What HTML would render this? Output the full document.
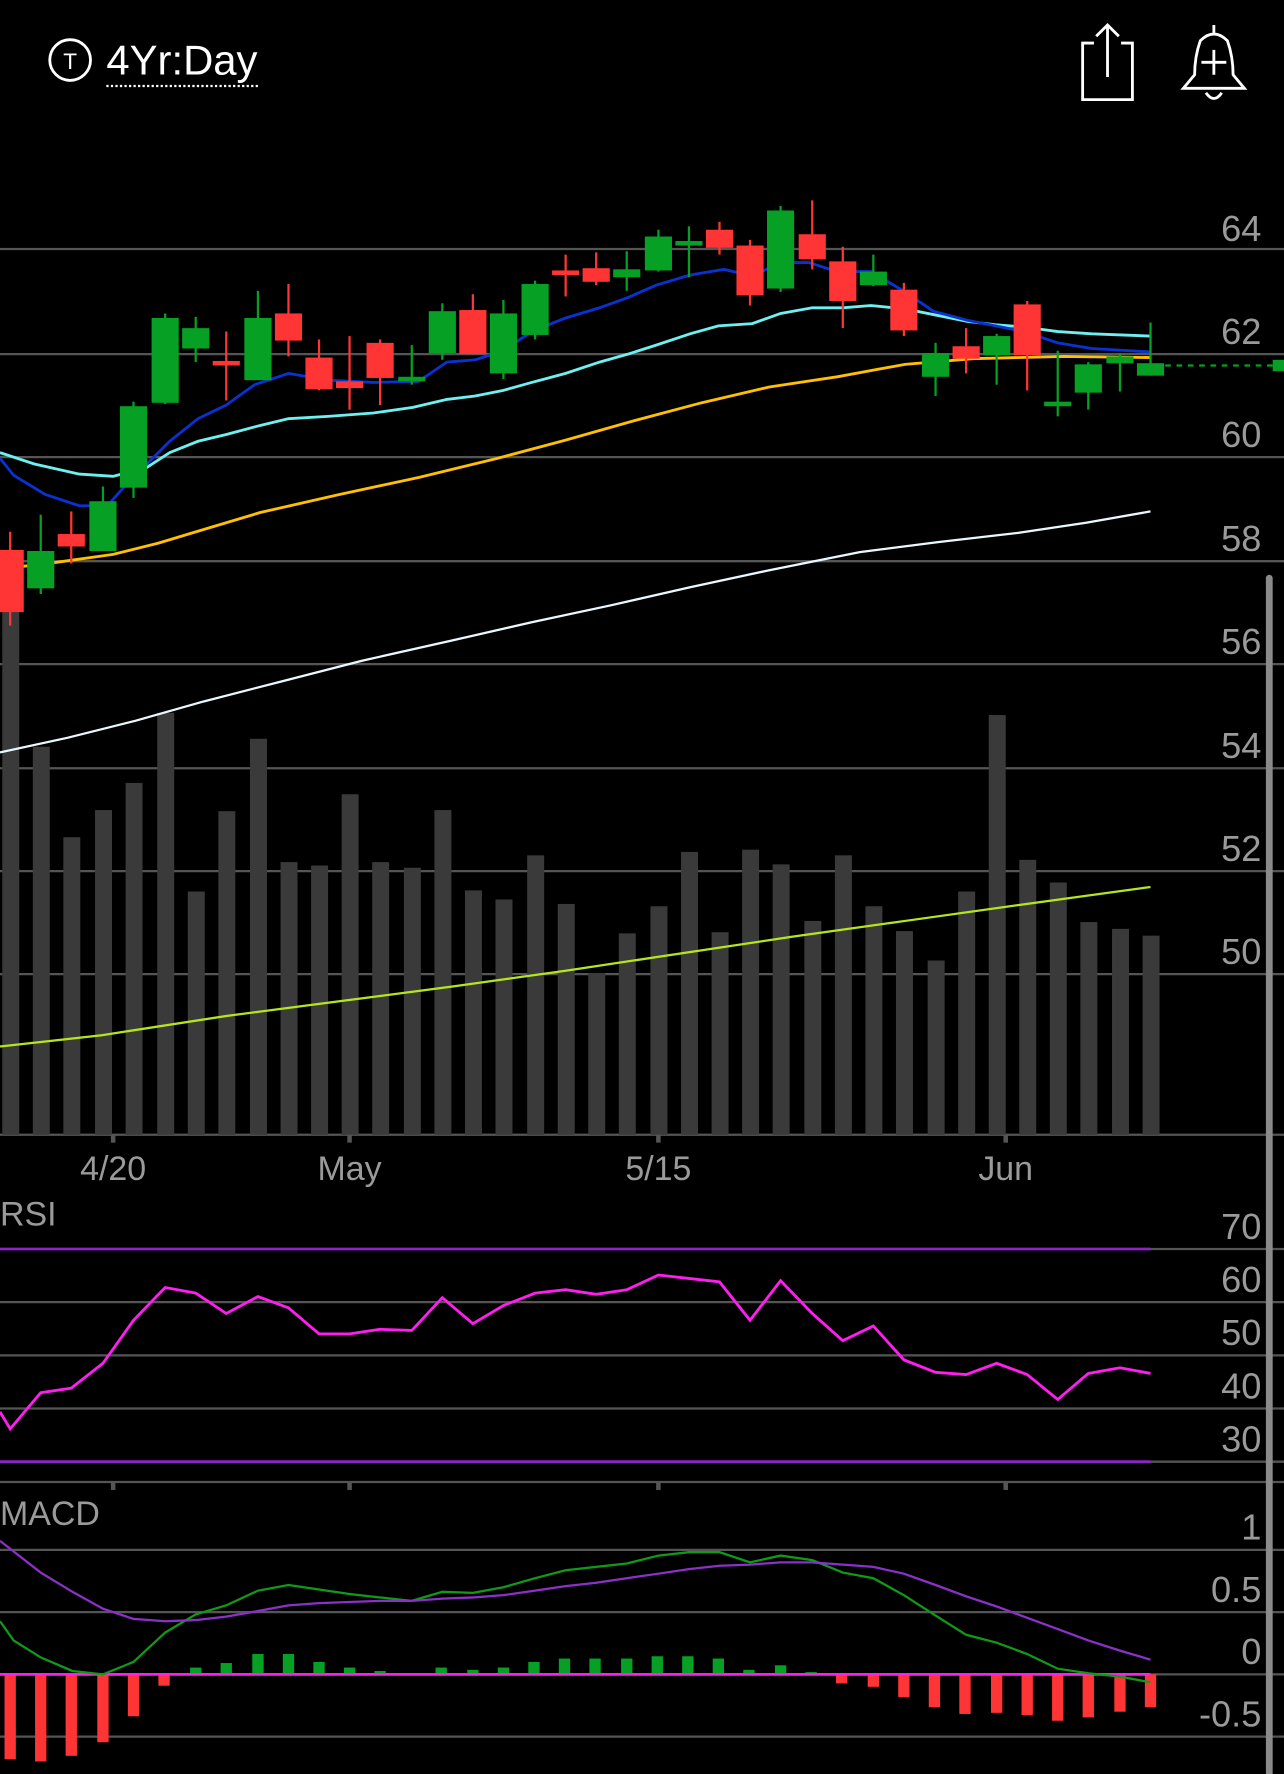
<!DOCTYPE html>
<html><head><meta charset="utf-8">
<style>
html,body{margin:0;padding:0;background:#000;}
svg{display:block;}
text{font-family:"Liberation Sans",sans-serif;}
</style></head><body>
<svg width="1284" height="1774" viewBox="0 0 1135 1568" xmlns="http://www.w3.org/2000/svg">
<rect width="1135" height="1568" fill="#000"/>
<!-- header -->
<circle cx="62" cy="53" r="18" fill="none" stroke="#fff" stroke-width="2.5"/>
<text x="62" y="61" font-size="20" fill="#fff" text-anchor="middle">T</text>
<text x="94" y="66" font-size="37" fill="#fff">4Yr:Day</text>
<line x1="94" y1="76" x2="228" y2="76" stroke="#fff" stroke-width="2" stroke-dasharray="2,2"/>
<g fill="none" stroke="#fff" stroke-width="2.5">
<path d="M967 38 H957 V88 H1001 V38 H991"/>
<path d="M979 68 V22 M969 32 L979 22 L989 32"/>
<path d="M1073 22 V30 M1061 36 Q1073 24 1085 36 Q1090 50 1090 66 L1100 78 H1046 L1056 66 Q1056 50 1061 36 Z"/>
<path d="M1066 82 Q1073 92 1080 82"/>
<path d="M1073 44 V66 M1062 55 H1084"/>
</g>
<!-- price grid -->
<g stroke="#555" stroke-width="2">
<line x1="0" y1="220" x2="1135" y2="220"/><line x1="0" y1="313" x2="1135" y2="313"/>
<line x1="0" y1="404" x2="1135" y2="404"/><line x1="0" y1="496" x2="1135" y2="496"/>
<line x1="0" y1="587" x2="1135" y2="587"/><line x1="0" y1="679" x2="1135" y2="679"/>
<line x1="0" y1="770" x2="1135" y2="770"/><line x1="0" y1="861" x2="1135" y2="861"/>
<line x1="0" y1="1003" x2="1135" y2="1003"/>
</g>
<g fill="#9a9a9a" font-size="32" text-anchor="end">
<text x="1115" y="213">64</text><text x="1115" y="304">62</text><text x="1115" y="395">60</text>
<text x="1115" y="487">58</text><text x="1115" y="578">56</text><text x="1115" y="670">54</text>
<text x="1115" y="761">52</text><text x="1115" y="852">50</text>
</g>
<!-- volume -->
<g fill="#3a3a3a">
<rect x="2" y="540" width="15" height="463"/><rect x="29" y="660" width="15" height="343"/>
<rect x="56" y="740" width="15" height="263"/><rect x="84" y="716" width="15" height="287"/>
<rect x="111" y="692" width="15" height="311"/><rect x="139" y="630" width="15" height="373"/>
<rect x="166" y="788" width="15" height="215"/><rect x="193" y="717" width="15" height="286"/>
<rect x="221" y="653" width="15" height="350"/><rect x="248" y="762" width="15" height="241"/>
<rect x="275" y="765" width="15" height="238"/><rect x="302" y="702" width="15" height="301"/>
<rect x="329" y="762" width="15" height="241"/><rect x="357" y="767" width="15" height="236"/>
<rect x="384" y="716" width="15" height="287"/><rect x="411" y="787" width="15" height="216"/>
<rect x="438" y="795" width="15" height="208"/><rect x="466" y="756" width="15" height="247"/>
<rect x="493" y="799" width="15" height="204"/><rect x="520" y="860" width="15" height="143"/>
<rect x="547" y="825" width="15" height="178"/><rect x="575" y="801" width="15" height="202"/>
<rect x="602" y="753" width="15" height="250"/><rect x="629" y="824" width="15" height="179"/>
<rect x="656" y="751" width="15" height="252"/><rect x="683" y="764" width="15" height="239"/>
<rect x="711" y="814" width="15" height="189"/><rect x="738" y="756" width="15" height="247"/>
<rect x="765" y="801" width="15" height="202"/><rect x="792" y="823" width="15" height="180"/>
<rect x="820" y="849" width="15" height="154"/><rect x="847" y="788" width="15" height="215"/>
<rect x="874" y="632" width="15" height="371"/><rect x="901" y="760" width="15" height="243"/>
<rect x="928" y="780" width="15" height="223"/><rect x="955" y="815" width="15" height="188"/>
<rect x="983" y="821" width="15" height="182"/><rect x="1010" y="827" width="15" height="176"/>
</g>
<polyline fill="none" stroke="#b5e61d" stroke-width="2" points="0,925 90,915 200,898 300,885 400,872 500,858 600,843 700,828 800,814 900,800 1017,784"/>
<!-- MAs -->
<polyline fill="none" stroke="#e8f8ff" stroke-width="2" points="0,665 60,652 120,637 180,620 250,602 320,584 400,566 470,550 540,535 610,519 680,504 760,488 830,479 900,471 960,462 1017,452"/>
<polyline fill="none" stroke="#ffc000" stroke-width="2.5" points="0,503 50,497 100,490 140,480 180,468 230,453 300,437 370,422 440,405 500,389 560,372 620,356 680,342 740,333 800,322 860,317 940,315 1017,316"/>
<polyline fill="none" stroke="#6ff0f0" stroke-width="2.5" points="0,400 30,410 70,419 100,421 130,413 150,400 175,390 200,384 230,376 255,370 290,368 330,365 365,360 395,353 420,350 445,345 470,338 500,330 530,320 555,313 580,305 610,295 635,288 665,286 690,277 718,272 745,272 770,270 800,273 825,278 855,284 880,287 905,289 935,293 965,295 1017,297"/>
<polyline fill="none" stroke="#0a32d0" stroke-width="2.5" points="0,405 12,420 40,437 70,447 95,447 110,430 130,410 150,390 175,370 200,358 225,340 255,330 290,336 330,338 370,337 395,320 420,318 445,310 470,293 500,281 530,272 555,263 580,252 610,243 640,238 665,244 690,232 715,232 740,240 770,240 800,258 825,275 855,283 880,288 905,293 935,303 965,308 1017,311"/>
<!-- candles -->
<g stroke-width="2">
<g stroke="#ff3535" fill="#ff3535">
<line x1="9" y1="470" x2="9" y2="553"/><rect x="-2" y="487" width="22" height="53"/>
<line x1="63" y1="452" x2="63" y2="498"/><rect x="52" y="473" width="22" height="9"/>
<line x1="200" y1="293" x2="200" y2="354"/><rect x="189" y="320" width="22" height="2"/>
<line x1="255" y1="251" x2="255" y2="315"/><rect x="244" y="278" width="22" height="22"/>
<line x1="282" y1="300" x2="282" y2="345"/><rect x="271" y="317" width="22" height="26"/>
<line x1="309" y1="297" x2="309" y2="362"/><rect x="298" y="338" width="22" height="4"/>
<line x1="336" y1="300" x2="336" y2="358"/><rect x="325" y="304" width="22" height="29"/>
<line x1="418" y1="260" x2="418" y2="313"/><rect x="407" y="275" width="22" height="37"/>
<line x1="500" y1="225" x2="500" y2="262"/><rect x="489" y="240" width="22" height="2"/>
<line x1="527" y1="223" x2="527" y2="252"/><rect x="516" y="238" width="22" height="10"/>
<line x1="636" y1="196" x2="636" y2="225"/><rect x="625" y="204" width="22" height="14"/>
<line x1="663" y1="212" x2="663" y2="270"/><rect x="652" y="218" width="22" height="42"/>
<line x1="718" y1="177" x2="718" y2="238"/><rect x="707" y="208" width="22" height="20"/>
<line x1="745" y1="218" x2="745" y2="290"/><rect x="734" y="232" width="22" height="33"/>
<line x1="799" y1="250" x2="799" y2="297"/><rect x="788" y="257" width="22" height="34"/>
<line x1="854" y1="290" x2="854" y2="330"/><rect x="843" y="307" width="22" height="9"/>
<line x1="908" y1="266" x2="908" y2="345"/><rect x="897" y="270" width="22" height="43"/>
</g>
<g stroke="#06a024" fill="#06a024">
<line x1="36" y1="455" x2="36" y2="525"/><rect x="25" y="488" width="22" height="31"/>
<line x1="91" y1="430" x2="91" y2="486"/><rect x="80" y="444" width="22" height="42"/>
<line x1="118" y1="355" x2="118" y2="440"/><rect x="107" y="360" width="22" height="70"/>
<line x1="146" y1="277" x2="146" y2="357"/><rect x="135" y="282" width="22" height="73"/>
<line x1="173" y1="280" x2="173" y2="320"/><rect x="162" y="291" width="22" height="16"/>
<line x1="228" y1="257" x2="228" y2="335"/><rect x="217" y="282" width="22" height="53"/>
<line x1="364" y1="305" x2="364" y2="340"/><rect x="353" y="334" width="22" height="2"/>
<line x1="391" y1="268" x2="391" y2="318"/><rect x="380" y="276" width="22" height="35"/>
<line x1="445" y1="265" x2="445" y2="335"/><rect x="434" y="278" width="22" height="51"/>
<line x1="473" y1="248" x2="473" y2="300"/><rect x="462" y="252" width="22" height="43"/>
<line x1="554" y1="222" x2="554" y2="257"/><rect x="543" y="239" width="22" height="5"/>
<line x1="582" y1="203" x2="582" y2="240"/><rect x="571" y="210" width="22" height="28"/>
<line x1="609" y1="200" x2="609" y2="245"/><rect x="598" y="214" width="22" height="2"/>
<line x1="690" y1="182" x2="690" y2="258"/><rect x="679" y="187" width="22" height="67"/>
<line x1="772" y1="225" x2="772" y2="253"/><rect x="761" y="241" width="22" height="10"/>
<line x1="827" y1="303" x2="827" y2="350"/><rect x="816" y="313" width="22" height="19"/>
<line x1="881" y1="295" x2="881" y2="340"/><rect x="870" y="298" width="22" height="15"/>
<line x1="935" y1="310" x2="935" y2="368"/><rect x="924" y="356" width="22" height="2"/>
<line x1="962" y1="320" x2="962" y2="362"/><rect x="951" y="323" width="22" height="23"/>
<line x1="990" y1="312" x2="990" y2="346"/><rect x="979" y="316" width="22" height="4"/>
<line x1="1017" y1="285" x2="1017" y2="332"/><rect x="1006" y="322" width="22" height="9"/>
</g>
</g>
<line x1="1030" y1="323" x2="1125" y2="323" stroke="#06a024" stroke-width="2" stroke-dasharray="5,5"/>
<rect x="1125" y="318" width="12" height="10" fill="#06a024"/>
<!-- date axis -->
<g stroke="#555" stroke-width="4">
<line x1="100" y1="1003" x2="100" y2="1010"/><line x1="309" y1="1003" x2="309" y2="1010"/>
<line x1="582" y1="1003" x2="582" y2="1010"/><line x1="889" y1="1003" x2="889" y2="1010"/>
</g>
<g fill="#9a9a9a" font-size="30" text-anchor="middle">
<text x="100" y="1043">4/20</text><text x="309" y="1043">May</text><text x="582" y="1043">5/15</text><text x="889" y="1043">Jun</text>
</g>
<!-- RSI -->
<text x="0" y="1083" fill="#9a9a9a" font-size="30">RSI</text>
<g stroke="#555" stroke-width="2">
<line x1="0" y1="1151" x2="1135" y2="1151"/><line x1="0" y1="1198" x2="1135" y2="1198"/>
<line x1="0" y1="1245" x2="1135" y2="1245"/><line x1="0" y1="1310" x2="1135" y2="1310"/>
<line x1="1017" y1="1104" x2="1135" y2="1104"/><line x1="1017" y1="1292" x2="1135" y2="1292"/>
</g>
<g stroke="#555" stroke-width="4">
<line x1="100" y1="1310" x2="100" y2="1317"/><line x1="309" y1="1310" x2="309" y2="1317"/>
<line x1="582" y1="1310" x2="582" y2="1317"/><line x1="889" y1="1310" x2="889" y2="1317"/>
</g>
<line x1="0" y1="1104" x2="1017" y2="1104" stroke="#8b25c0" stroke-width="2.5"/>
<line x1="0" y1="1292" x2="1017" y2="1292" stroke="#8b25c0" stroke-width="2.5"/>
<g fill="#9a9a9a" font-size="32" text-anchor="end">
<text x="1115" y="1095">70</text><text x="1115" y="1142">60</text><text x="1115" y="1189">50</text>
<text x="1115" y="1236">40</text><text x="1115" y="1283">30</text>
</g>
<polyline fill="none" stroke="#ff1ef0" stroke-width="2.5" points="0,1248 9,1263 36,1231 63,1227 91,1205 118,1167 146,1138 173,1143 200,1161 228,1146 255,1156 282,1179 309,1179 336,1175 364,1176 391,1147 418,1170 445,1154 473,1143 500,1140 527,1144 554,1140 582,1127 609,1130 636,1133 663,1167 690,1132 718,1161 745,1185 772,1172 799,1202 827,1213 854,1215 881,1205 908,1215 935,1237 962,1214 990,1209 1017,1214"/>
<!-- MACD -->
<text x="0" y="1348" fill="#9a9a9a" font-size="30">MACD</text>
<g stroke="#555" stroke-width="2">
<line x1="0" y1="1370" x2="1135" y2="1370"/><line x1="0" y1="1425" x2="1135" y2="1425"/>
<line x1="0" y1="1480" x2="1135" y2="1480"/><line x1="0" y1="1535" x2="1135" y2="1535"/>
</g>
<g fill="#9a9a9a" font-size="32" text-anchor="end">
<text x="1115" y="1361">1</text><text x="1115" y="1416">0.5</text><text x="1115" y="1471">0</text><text x="1115" y="1526">-0.5</text>
</g>
<g fill="#ff3535">
<rect x="4" y="1480" width="10" height="75"/><rect x="31" y="1480" width="10" height="77"/>
<rect x="58" y="1480" width="10" height="72"/><rect x="86" y="1480" width="10" height="60"/>
<rect x="113" y="1480" width="10" height="37"/><rect x="140" y="1480" width="10" height="10"/>
<rect x="739" y="1480" width="10" height="8"/><rect x="767" y="1480" width="10" height="11"/>
<rect x="794" y="1480" width="10" height="20"/><rect x="821" y="1480" width="10" height="29"/>
<rect x="848" y="1480" width="10" height="35"/><rect x="876" y="1480" width="10" height="34"/>
<rect x="903" y="1480" width="10" height="36"/><rect x="930" y="1480" width="10" height="41"/>
<rect x="957" y="1480" width="10" height="38"/><rect x="985" y="1480" width="10" height="33"/>
<rect x="1012" y="1480" width="10" height="29"/>
</g>
<g fill="#06a024">
<rect x="168" y="1474" width="10" height="6"/><rect x="195" y="1470" width="10" height="10"/>
<rect x="223" y="1462" width="10" height="18"/><rect x="250" y="1462" width="10" height="18"/>
<rect x="277" y="1469" width="10" height="11"/><rect x="304" y="1474" width="10" height="6"/>
<rect x="331" y="1477" width="10" height="3"/><rect x="385" y="1474" width="10" height="6"/>
<rect x="413" y="1476" width="10" height="4"/><rect x="440" y="1474" width="10" height="6"/>
<rect x="467" y="1469" width="10" height="11"/><rect x="494" y="1466" width="10" height="14"/>
<rect x="521" y="1466" width="10" height="14"/><rect x="549" y="1466" width="10" height="14"/>
<rect x="576" y="1464" width="10" height="16"/><rect x="603" y="1464" width="10" height="16"/>
<rect x="630" y="1466" width="10" height="14"/><rect x="657" y="1476" width="10" height="4"/>
<rect x="685" y="1472" width="10" height="8"/><rect x="712" y="1478" width="10" height="2"/>
</g>
<line x1="0" y1="1480" x2="1017" y2="1480" stroke="#ff1ef0" stroke-width="2.5"/>
<polyline fill="none" stroke="#109a18" stroke-width="2" points="0,1433 12,1450 36,1465 64,1477 91,1480 118,1469 146,1443 173,1427 200,1419 228,1406 255,1401 282,1405 309,1409 336,1412 364,1415 391,1407 418,1408 445,1403 473,1395 500,1388 527,1385 554,1382 582,1375 609,1372 636,1372 663,1381 690,1375 718,1379 745,1390 772,1395 799,1410 827,1428 854,1445 881,1452 908,1462 935,1475 962,1479 990,1482 1017,1487"/>
<polyline fill="none" stroke="#8b30c8" stroke-width="2" points="0,1362 36,1390 64,1407 91,1422 118,1431 146,1433 173,1432 200,1429 228,1424 255,1419 282,1417 309,1416 336,1415 364,1415 391,1413 418,1412 445,1410 473,1406 500,1402 527,1399 554,1395 582,1391 609,1387 636,1384 663,1383 690,1381 718,1381 745,1383 772,1385 799,1391 827,1401 854,1411 881,1420 908,1430 935,1440 962,1450 990,1459 1017,1467"/>
<!-- scrollbar -->
<rect x="1119" y="508" width="6" height="1062" rx="3" fill="#8a8a8a"/>
</svg>
</body></html>
